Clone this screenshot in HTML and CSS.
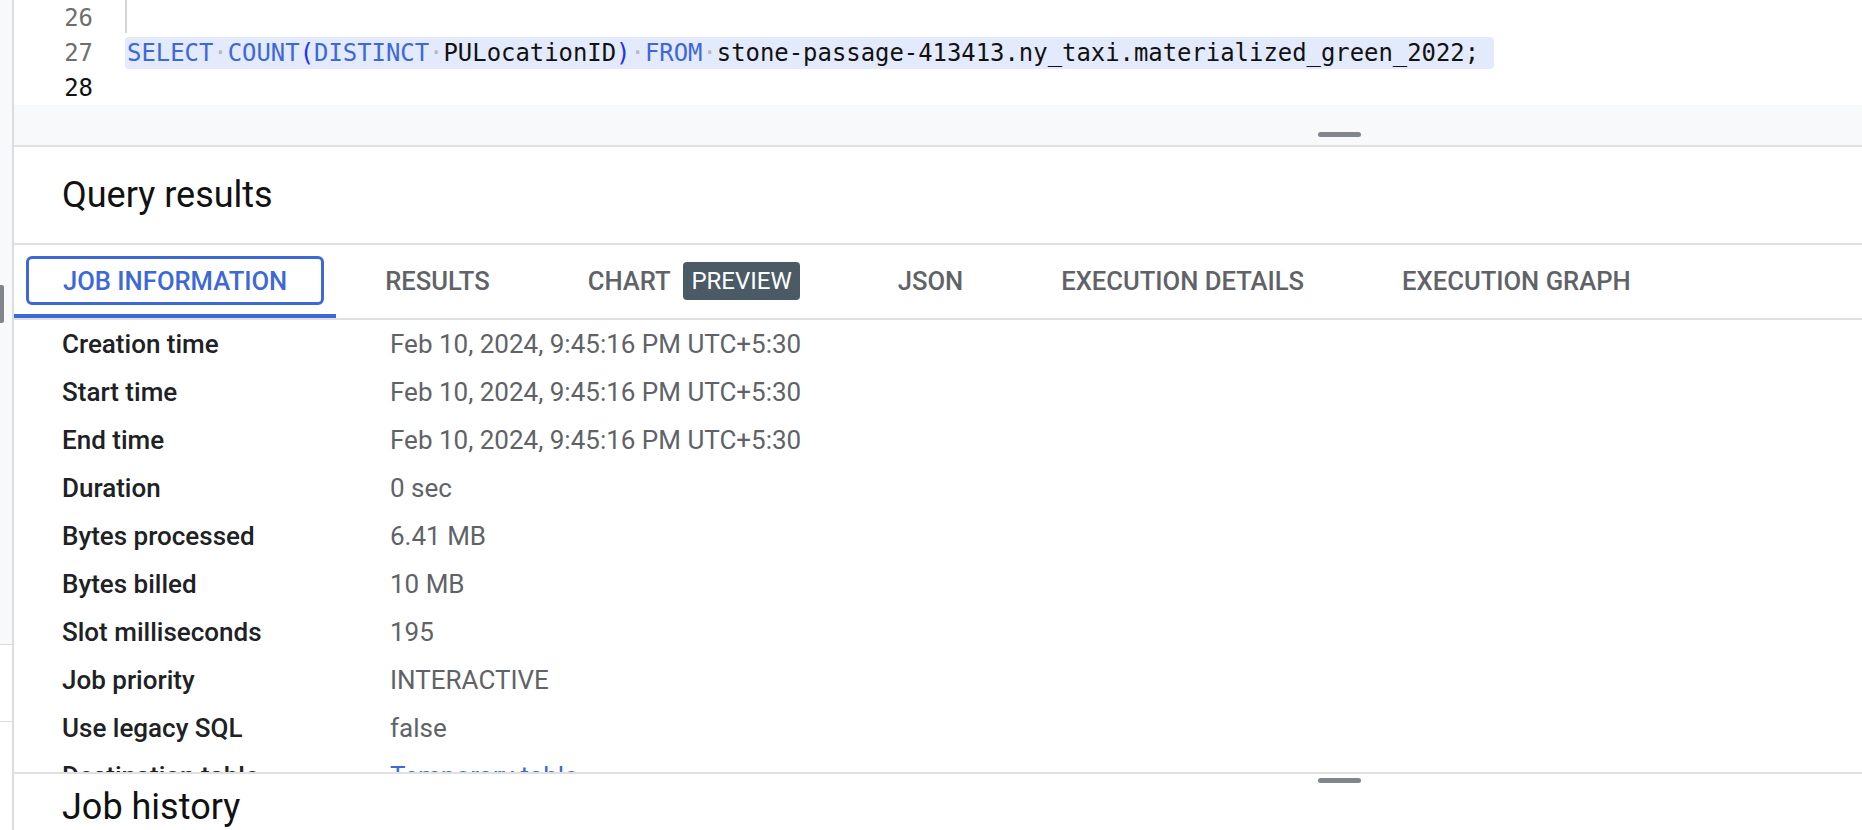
FILE: index.html
```html
<!DOCTYPE html>
<html>
<head>
<meta charset="utf-8">
<link rel="stylesheet" href="styles.css">
</head>
<body>
<div class="app">
  <div class="rail">
    <div class="rail-top"><div class="rail-handle"></div></div>
    <div class="rail-mid"></div>
  </div>
  <div class="main">
    <div class="editor">
      <div class="code-area">
        <div class="code-line"><span class="ln">26</span><span class="code guide"></span></div>
        <div class="code-line"><span class="ln">27</span><span class="code hl"><span class="kw">SELECT</span><span class="ws">·</span><span class="kw">COUNT</span><span class="par">(</span><span class="kw">DISTINCT</span><span class="ws">·</span><span class="id">PULocationID</span><span class="par">)</span><span class="ws">·</span><span class="kw">FROM</span><span class="ws">·</span><span class="id">stone-passage-413413.ny_taxi.materialized_green_2022;</span></span></div>
        <div class="code-line"><span class="ln cur">28</span><span class="code"></span></div>
      </div>
      <div class="editor-foot"><div class="drag-handle"></div></div>
    </div>
    <div class="panel-title">Query results</div>
    <div class="tabs">
      <div class="tab active"><span class="tab-inner">JOB INFORMATION</span></div>
      <div class="tab"><span class="tab-inner">RESULTS</span></div>
      <div class="tab"><span class="tab-inner">CHART <span class="badge">PREVIEW</span></span></div>
      <div class="tab"><span class="tab-inner">JSON</span></div>
      <div class="tab"><span class="tab-inner">EXECUTION DETAILS</span></div>
      <div class="tab"><span class="tab-inner">EXECUTION GRAPH</span></div>
    </div>
    <div class="info">
      <div class="row"><span class="label">Creation time</span><span class="value">Feb 10, 2024, 9:45:16 PM UTC+5:30</span></div>
      <div class="row"><span class="label">Start time</span><span class="value">Feb 10, 2024, 9:45:16 PM UTC+5:30</span></div>
      <div class="row"><span class="label">End time</span><span class="value">Feb 10, 2024, 9:45:16 PM UTC+5:30</span></div>
      <div class="row"><span class="label">Duration</span><span class="value">0 sec</span></div>
      <div class="row"><span class="label">Bytes processed</span><span class="value">6.41 MB</span></div>
      <div class="row"><span class="label">Bytes billed</span><span class="value">10 MB</span></div>
      <div class="row"><span class="label">Slot milliseconds</span><span class="value">195</span></div>
      <div class="row"><span class="label">Job priority</span><span class="value">INTERACTIVE</span></div>
      <div class="row"><span class="label">Use legacy SQL</span><span class="value">false</span></div>
      <div class="row"><span class="label">Destination table</span><span class="value link">Temporary table</span></div>
    </div>
    <div class="history">
      <div class="history-handle-row"><div class="drag-handle"></div></div>
      <div class="history-title">Job history</div>
    </div>
  </div>
</div>
</body>
</html>
```
FILE: styles.css
```css
* { box-sizing: border-box; }
html, body { margin: 0; padding: 0; }
body {
  width: 1862px;
  height: 830px;
  overflow: hidden;
  background: #ffffff;
  font-family: Roboto, "Liberation Sans", Arial, sans-serif;
  color: #202124;
}
.app {
  display: flex;
  height: 830px;
}
.rail {
  width: 14px;
  flex: none;
  border-right: 2px solid #dadce0;
  display: flex;
  flex-direction: column;
  background: #ffffff;
}
.rail-top {
  height: 645px;
  background: #f8f9fa;
  border-bottom: 1px solid #dadce0;
  padding-top: 285px;
}
.rail-handle {
  width: 4px;
  height: 38px;
  background: #80868b;
  border-radius: 0 2px 2px 0;
}
.rail-mid {
  height: 77px;
  border-bottom: 1px solid #dadce0;
}
.main {
  flex: 1;
  display: flex;
  flex-direction: column;
  min-width: 0;
  overflow: hidden;
}
.editor {
  background: #f8f9fa;
  border-bottom: 2px solid #e0e0e0;
}
.code-area {
  background: #ffffff;
  height: 105px;
}
.code-line {
  display: flex;
  align-items: center;
  height: 35px;
  font-family: "DejaVu Sans Mono", "Liberation Mono", monospace;
  font-size: 23.9px;
}
.ln {
  width: 111px;
  flex: none;
  text-align: right;
  padding-right: 32px;
  color: #6e6e6e;
}
.ln.cur { color: #111111; }
.code {
  height: 32px;
  line-height: 32px;
  padding-left: 2px;
  white-space: pre;
}
.code.guide {
  border-left: 2px solid #d4d4d4;
  height: 33px;
  align-self: flex-start;
}
.code.hl {
  background: #e3eafb;
  border-radius: 4px;
  padding-right: 15px;
}
.kw { color: #3d68d8; }
.par { color: #1f2dff; }
.ws { color: #b8b8b8; }
.id { color: #111111; }
.editor-foot {
  height: 40px;
  padding-top: 27px;
  padding-left: 1304px;
}
.drag-handle {
  width: 43px;
  height: 5px;
  border-radius: 3px;
  background: #80868b;
}
.panel-title {
  height: 98px;
  line-height: 96px;
  padding-left: 48px;
  font-size: 36px;
  font-weight: 400;
  color: #111111;
  border-bottom: 2px solid #e0e0e0;
}
.tabs {
  display: flex;
  height: 75px;
  border-bottom: 2px solid #e0e0e0;
}
.tab {
  height: 73px;
  padding: 0 12px;
  display: flex;
  align-items: center;
  border-bottom: 4px solid transparent;
  font-size: 25.6px;
  font-weight: 500;
  color: #5f6368;
}
.tab.active {
  border-bottom-color: #3e68d7;
}
.tab-inner {
  display: flex;
  align-items: center;
  height: 49px;
  padding: 0 34px;
  border: 3px solid transparent;
  border-radius: 6px;
  margin-top: 2px;
  white-space: pre;
}
.tab.active .tab-inner {
  border-color: #3e68d7;
  color: #3e68d7;
}
.badge {
  display: inline-flex;
  align-items: center;
  height: 38px;
  padding: 0 8px;
  margin-left: 7px;
  background: #4a5b66;
  color: #ffffff;
  border-radius: 4px;
  font-weight: 400;
  font-size: 24px;
}
.info {
  height: 452px;
  overflow: hidden;
  padding-left: 48px;
}
.row {
  display: flex;
  align-items: center;
  height: 48px;
  font-size: 26px;
}
.label {
  width: 328px;
  flex: none;
  font-weight: 500;
  color: #202124;
}
.value {
  color: #5f6368;
}
.value.link { color: #3e68d7; }
.history {
  flex: 1;
  border-top: 2px solid #e0e0e0;
}
.history-handle-row {
  height: 12px;
  padding-top: 4px;
  padding-left: 1304px;
}
.history-title {
  height: 42px;
  line-height: 42px;
  padding-left: 48px;
  font-size: 36px;
  color: #111111;
}
```
